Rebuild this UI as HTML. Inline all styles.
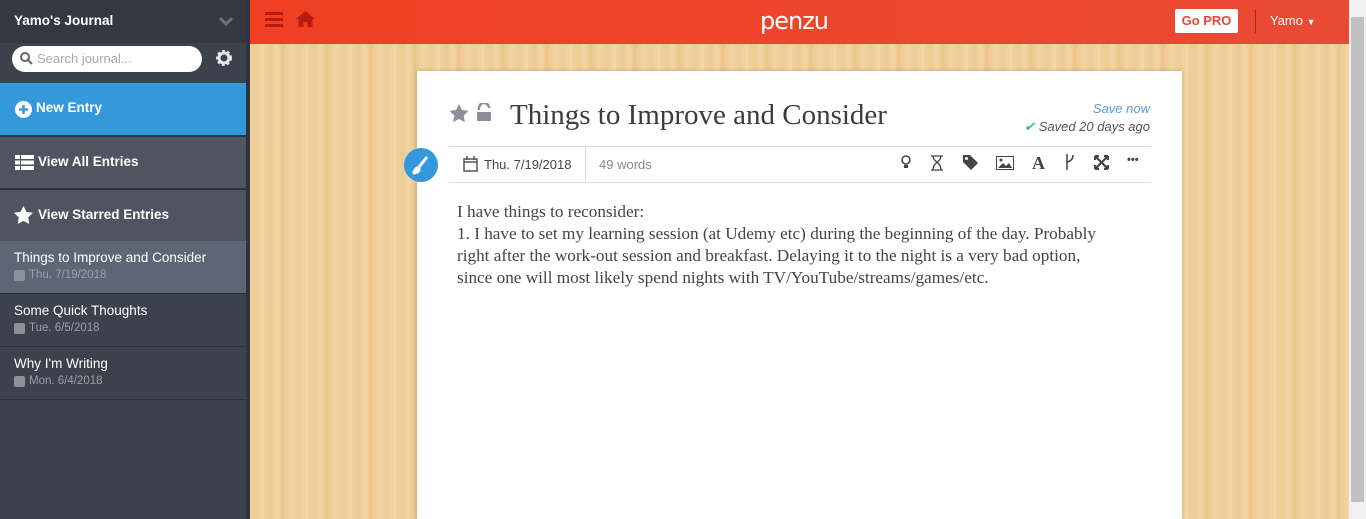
<!DOCTYPE html>
<html><head><meta charset="utf-8"><style>
*{margin:0;padding:0;box-sizing:border-box}
html,body{width:1366px;height:519px;overflow:hidden}
body{font-family:"Liberation Sans",sans-serif;position:relative;
background:repeating-linear-gradient(90deg,#f1d19c 0,#eccb95 7px,#f3d6a4 13px,#e9c58d 19px,#f2d4a0 27px,#edcd98 36px,#f4d8a6 44px);}
#side{position:absolute;left:0;top:0;height:519px;background:#3c414b;border-right:4px solid #2f333b;width:250px}
.hd{height:43px;background:#343841;color:#fff;font-weight:bold;font-size:13.5px;padding:13px 14px;position:relative}
.inp{position:absolute;left:12px;top:46px;width:190px;height:26px;background:#fff;border-radius:13px;color:#aaa;font-size:13px;padding:5px 0 0 25px}
.ne{position:absolute;top:83px;left:0;width:246px;height:52px;background:#3598db;color:#fff;font-weight:bold;font-size:13.5px;padding:17px 36px}
.nav{position:absolute;left:0;width:246px;height:53px;background:#4f5560;color:#fff;font-weight:bold;font-size:13.5px;padding:17px 38px;border-top:2px solid #2f333b}
.ent{position:absolute;left:0;width:246px;height:53px;border-bottom:1px solid #2c3038;padding:9px 14px;color:#fff;font-size:13.5px}
.ent small{display:block;color:#9aa0a8;font-size:11.5px;margin-top:4px;padding-left:15px;position:relative}
.ent small:before{content:"";position:absolute;left:0;top:1px;width:11px;height:11px;background:#8b9099;border-radius:2px}
#top{position:absolute;left:250px;top:0;width:1099px;height:44px;background:linear-gradient(90deg,#f03f22,#ea4a35)}
#sb{position:absolute;left:1349px;top:0;width:17px;height:519px;background:#f0f0f0}
#sb div{position:absolute;left:2px;top:17px;width:13px;height:485px;background:#c1c1c1}
#paper{position:absolute;left:417px;top:71px;width:765px;height:448px;background:#fff;box-shadow:0 0 4px rgba(0,0,0,.2)}
.title{position:absolute;left:93px;top:28px;font-family:"Liberation Serif",serif;font-size:29px;color:#3c3c3c}
.tb{position:absolute;left:32px;top:75px;width:702px;height:37px;border-top:1px solid #ddd;border-bottom:1px solid #ddd;font-size:13px;color:#444}
.body{position:absolute;left:40px;top:130px;font-family:"Liberation Serif",serif;font-size:17.2px;line-height:22px;color:#444;white-space:nowrap}
</style></head><body>
<div id="side">
<div class="hd">Yamo's Journal<svg style="position:absolute;left:219px;top:16px" width="14" height="10"><path d="M1 2l6 6 6-6" stroke="#6a707a" stroke-width="3" fill="none"/></svg></div>
<div class="inp">Search journal...</div>
<svg style="position:absolute;left:19px;top:51px" width="14" height="14"><circle cx="6" cy="6" r="4" stroke="#666" stroke-width="2" fill="none"/><path d="M9 9l4 4" stroke="#666" stroke-width="2"/></svg>
<svg style="position:absolute;left:214px;top:48px" width="20" height="20"><circle cx="10" cy="10" r="6" fill="none" stroke="#e5e7eb" stroke-width="4" stroke-dasharray="2.4 2"/><circle cx="10" cy="10" r="5" fill="none" stroke="#e5e7eb" stroke-width="3"/></svg>
<div class="ne"><svg style="position:absolute;left:15px;top:18px" width="17" height="17"><circle cx="8.5" cy="8.5" r="8.5" fill="#fff"/><path d="M8.5 4v9M4 8.5h9" stroke="#3598db" stroke-width="2.5"/></svg>New Entry</div>
<div class="nav" style="top:135px"><svg style="position:absolute;left:15px;top:18px" width="19" height="15"><path d="M0 0h5v4H0zM6 0h13v4H6zM0 5.5h5v4H0zM6 5.5h13v4H6zM0 11h5v4H0zM6 11h13v4H6z" fill="#fff"/></svg>View All Entries</div>
<div class="nav" style="top:188px"><svg style="position:absolute;left:14px;top:16px" width="19" height="18"><path d="M9.5 0l2.9 5.9 6.6.9-4.8 4.6 1.1 6.6-5.8-3.1-5.8 3.1 1.1-6.6L0 6.8l6.6-.9z" fill="#fff"/></svg>View Starred Entries</div>
<div class="ent" style="top:241px;background:#5e6676">Things to Improve and Consider<small>Thu. 7/19/2018</small></div>
<div class="ent" style="top:294px">Some Quick Thoughts<small>Tue. 6/5/2018</small></div>
<div class="ent" style="top:347px">Why I'm Writing<small>Mon. 6/4/2018</small></div>
</div>
<div id="top">
<svg style="position:absolute;left:15px;top:12px" width="18" height="15"><path d="M0 1.5h18M0 7.5h18M0 13.5h18" stroke="#b81c10" stroke-width="3"/></svg>
<svg style="position:absolute;left:46px;top:11px" width="19" height="16"><path d="M9.5 0L0 8h2.5v8h5v-5h4v5h5V8H19z" fill="#b81c10"/></svg>
<div style="position:absolute;left:510px;top:7px;color:#fff;font-family:'DejaVu Sans',sans-serif;font-size:24px;letter-spacing:-1px">penzu</div>
<div style="position:absolute;left:925px;top:9px;width:63px;height:24px;background:#fff;border-radius:2px;color:#e8473a;font-weight:bold;font-size:13px;text-align:center;line-height:24px">Go PRO</div>
<div style="position:absolute;left:1005px;top:9px;width:1px;height:24px;background:#b52518"></div>
<div style="position:absolute;left:1020px;top:13px;color:#fff;font-size:13px">Yamo <span style="font-size:9px">▼</span></div>
</div>
<div id="sb"><div></div></div>
<div id="paper">
<svg style="position:absolute;left:32px;top:33px" width="20" height="19"><path d="M10 0l2.9 6 6.6.9-4.8 4.6 1.1 6.6L10 15l-5.8 3.1 1.1-6.6L.5 6.9 7.1 6z" fill="#8a8f99"/></svg>
<svg style="position:absolute;left:60px;top:32px" width="14" height="18"><path d="M2 7V5a5 5 0 0 1 10 0" stroke="#8a8f99" stroke-width="2.5" fill="none"/><rect x="0" y="9" width="14" height="9" rx="1" fill="#8a8f99"/></svg>
<div class="title">Things to Improve and Consider</div>
<div style="position:absolute;right:32px;top:30px;color:#5b9bd5;font-style:italic;font-size:13px">Save now</div>
<div style="position:absolute;right:32px;top:48px;color:#555;font-style:italic;font-size:13px"><span style="color:#26b58f">✔</span> Saved 20 days ago</div>
<div style="position:absolute;left:-13px;top:77px;width:34px;height:34px;border-radius:50%;background:#3598db"><svg width="34" height="34"><path d="M23 9l-8 10M13 20c-2 1-2 4-4 5 3 0 6-1 6-4z" stroke="#fff" stroke-width="3" fill="#fff"/></svg></div>
<div class="tb">
<svg style="position:absolute;left:14px;top:9px" width="15" height="16"><rect x="1" y="3" width="13" height="12" stroke="#555" stroke-width="1.5" fill="none"/><path d="M1 6h13M4 0v4M11 0v4" stroke="#555" stroke-width="1.5"/></svg>
<span style="position:absolute;left:35px;top:10px">Thu. 7/19/2018</span>
<div style="position:absolute;left:136px;top:0;width:1px;height:36px;background:#ddd"></div>
<span style="position:absolute;left:150px;top:10px;color:#888">49 words</span>
<span style="position:absolute;left:452px;top:7px;color:#444;font-size:15px">
<svg width="12" height="17" style="position:absolute;left:0;top:1px"><circle cx="5" cy="5" r="4" stroke="#444" stroke-width="1.5" fill="none"/><path d="M3 10h4v3H3z" fill="#444"/></svg>
<svg width="14" height="17" style="position:absolute;left:29px;top:1px"><path d="M1 1h12M1 15h12M3 1c0 6 8 6 8 14M11 1c0 6-8 6-8 14" stroke="#444" stroke-width="1.3" fill="none"/></svg>
<svg width="16" height="16" style="position:absolute;left:62px;top:1px"><path d="M0 0h7l8 8-7 7-8-8z" fill="#444"/><circle cx="3.5" cy="3.5" r="1.5" fill="#fff"/></svg>
<svg width="18" height="14" style="position:absolute;left:95px;top:2px"><rect x=".5" y=".5" width="17" height="13" stroke="#444" fill="none"/><path d="M2 12l5-5 3 3 3-3 3 5z" fill="#444"/><circle cx="5" cy="4" r="1.5" fill="#444"/></svg>
<span style="position:absolute;left:131px;top:-1px;font-family:'Liberation Serif',serif;font-size:18px;font-weight:bold">A</span>
<svg width="10" height="17" style="position:absolute;left:164px;top:0"><path d="M2 0v16M2 8c5-1 6-4 6-7" stroke="#444" stroke-width="1.5" fill="none"/></svg>
<svg width="15" height="15" style="position:absolute;left:193px;top:1px"><path d="M1 1l13 13M14 1L1 14M1 1h4M1 1v4M14 1h-4M14 1v4M1 14h4M1 14v-4M14 14h-4M14 14v-4" stroke="#444" stroke-width="2.2" fill="none"/></svg>
<span style="position:absolute;left:226px;top:0;font-weight:bold;font-size:11px">•••</span>
</span>
</div>
<div class="body">I have things to reconsider:<br>1. I have to set my learning session (at Udemy etc) during the beginning of the day. Probably<br>right after the work-out session and breakfast. Delaying it to the night is a very bad option,<br>since one will most likely spend nights with TV/YouTube/streams/games/etc.</div>
</div>
</body></html>
